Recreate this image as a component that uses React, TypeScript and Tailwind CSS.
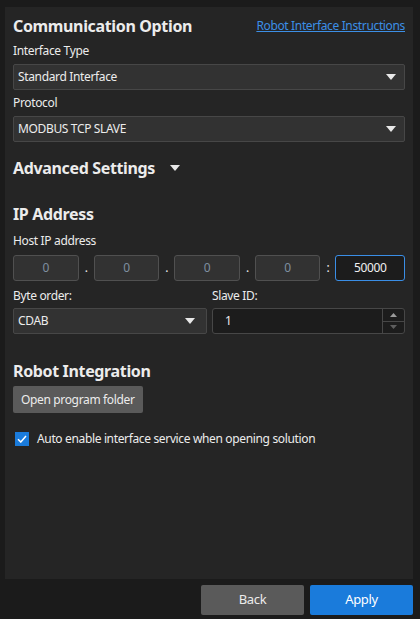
import { useState } from "react";

function Caret({ className = "" }: { className?: string }) {
  return (
    <svg width="10" height="6" viewBox="0 0 10 6" className={className}>
      <path d="M0 0 H10 L5 6 Z" fill="#e8e8e8" />
    </svg>
  );
}

function Select({ value, className = "" }: { value: string; className?: string }) {
  return (
    <div
      className={`flex h-[26px] items-center justify-between rounded-[2px] border border-[#474747] bg-[#323232] pl-[4px] pr-[8px] text-[12px] text-[#ececec] ${className}`}
    >
      <span>{value}</span>
      <Caret />
    </div>
  );
}

function IpBox({ value }: { value: string }) {
  return (
    <div className="flex h-[26px] w-[66px] items-center justify-center rounded-[3px] border border-[#505050] bg-[#323232] text-[12px] text-[#7f8fa0]">
      {value}
    </div>
  );
}

export default function App() {
  const [autoEnable, setAutoEnable] = useState(true);

  return (
    <div
      className="flex h-[619px] w-[420px] flex-col bg-[#1b1b1b] tracking-[-0.35px] text-[#ececec]"
      style={{ fontFamily: '"Noto Sans", "Open Sans", sans-serif' }}
    >
      <div className="mx-[5px] mt-[7px] h-[572px] w-[408px] bg-[#252525] px-[8px] pt-[8px]">
        <div className="flex items-center justify-between">
          <h1 className="text-[16px] font-bold leading-[22px]">Communication Option</h1>
          <a className="text-[12px] text-[#3c8fe6] underline">Robot Interface Instructions</a>
        </div>

        <div className="mt-[6px] text-[12px] leading-[16px]">Interface Type</div>
        <Select value="Standard Interface" className="mt-[5px]" />

        <div className="mt-[5px] text-[12px] leading-[16px]">Protocol</div>
        <Select value="MODBUS TCP SLAVE" className="mt-[5px]" />

        <div className="mt-[15px] flex items-center gap-[15px]">
          <h2 className="text-[16px] font-bold leading-[22px]">Advanced Settings</h2>
          <Caret />
        </div>

        <h2 className="mt-[24px] text-[16px] font-bold leading-[22px]">IP Address</h2>
        <div className="mt-[8px] text-[12px] leading-[16px]">Host IP address</div>

        <div className="mt-[6px] flex items-center">
          <IpBox value="0" />
          <span className="w-[15px] text-center text-[12px]">.</span>
          <IpBox value="0" />
          <span className="w-[15px] text-center text-[12px]">.</span>
          <IpBox value="0" />
          <span className="w-[15px] text-center text-[12px]">.</span>
          <IpBox value="0" />
          <span className="w-[15px] text-center text-[12px]">:</span>
          <div className="flex h-[26px] w-[70px] items-center justify-center rounded-[3px] border border-[#3a8ee6] bg-[#1c1c1c] text-[12px] text-[#f0f0f0]">
            50000
          </div>
        </div>

        <div className="mt-[7px] grid grid-cols-[194px_1fr] gap-x-[5px]">
          <div className="text-[12px] leading-[16px]">Byte order:</div>
          <div className="text-[12px] leading-[16px]">Slave ID:</div>
          <Select value="CDAB" className="mt-[4px] pr-[11px]" />
          <div className="mt-[4px] flex h-[26px] rounded-[3px] border border-[#474747] bg-[#1c1c1c] text-[12px]">
            <div className="flex flex-1 items-center pl-[12px]">1</div>
            <div className="flex w-[22px] flex-col border-l border-[#474747]">
              <div className="flex flex-1 items-center justify-center border-b border-[#474747]">
                <svg width="7" height="4" viewBox="0 0 7 4">
                  <path d="M0 4 H7 L3.5 0 Z" fill="#9a9a9a" />
                </svg>
              </div>
              <div className="flex flex-1 items-center justify-center">
                <svg width="7" height="4" viewBox="0 0 7 4">
                  <path d="M0 0 H7 L3.5 4 Z" fill="#5e5e5e" />
                </svg>
              </div>
            </div>
          </div>
        </div>

        <h2 className="mt-[26px] text-[16px] font-bold leading-[22px]">Robot Integration</h2>
        <button className="mt-[4px] flex h-[27px] items-center rounded-[2px] bg-[#5a5a5a] px-[8px] text-[12px] text-[#ececec]">
          Open program folder
        </button>

        <label className="mt-[17px] flex items-center gap-[8px] pl-[2px] text-[12px]">
          <span
            onClick={() => setAutoEnable(!autoEnable)}
            className="flex h-[14px] w-[14px] items-center justify-center bg-[#1a7bdb]"
          >
            {autoEnable && (
              <svg width="10" height="8" viewBox="0 0 10 8">
                <path d="M1 4.2 L3.8 7 L9 1" fill="none" stroke="#ffffff" strokeWidth="1.5" />
              </svg>
            )}
          </span>
          Auto enable interface service when opening solution
        </label>
      </div>

      <div className="mt-[6px] flex justify-end gap-[6px] pr-[7px]">
        <button className="h-[30px] w-[103px] rounded-[2px] bg-[#5a5a5a] text-[13px] text-[#ececec]">Back</button>
        <button className="h-[30px] w-[103px] rounded-[2px] bg-[#1a7bdb] text-[13px] text-white">Apply</button>
      </div>
    </div>
  );
}
